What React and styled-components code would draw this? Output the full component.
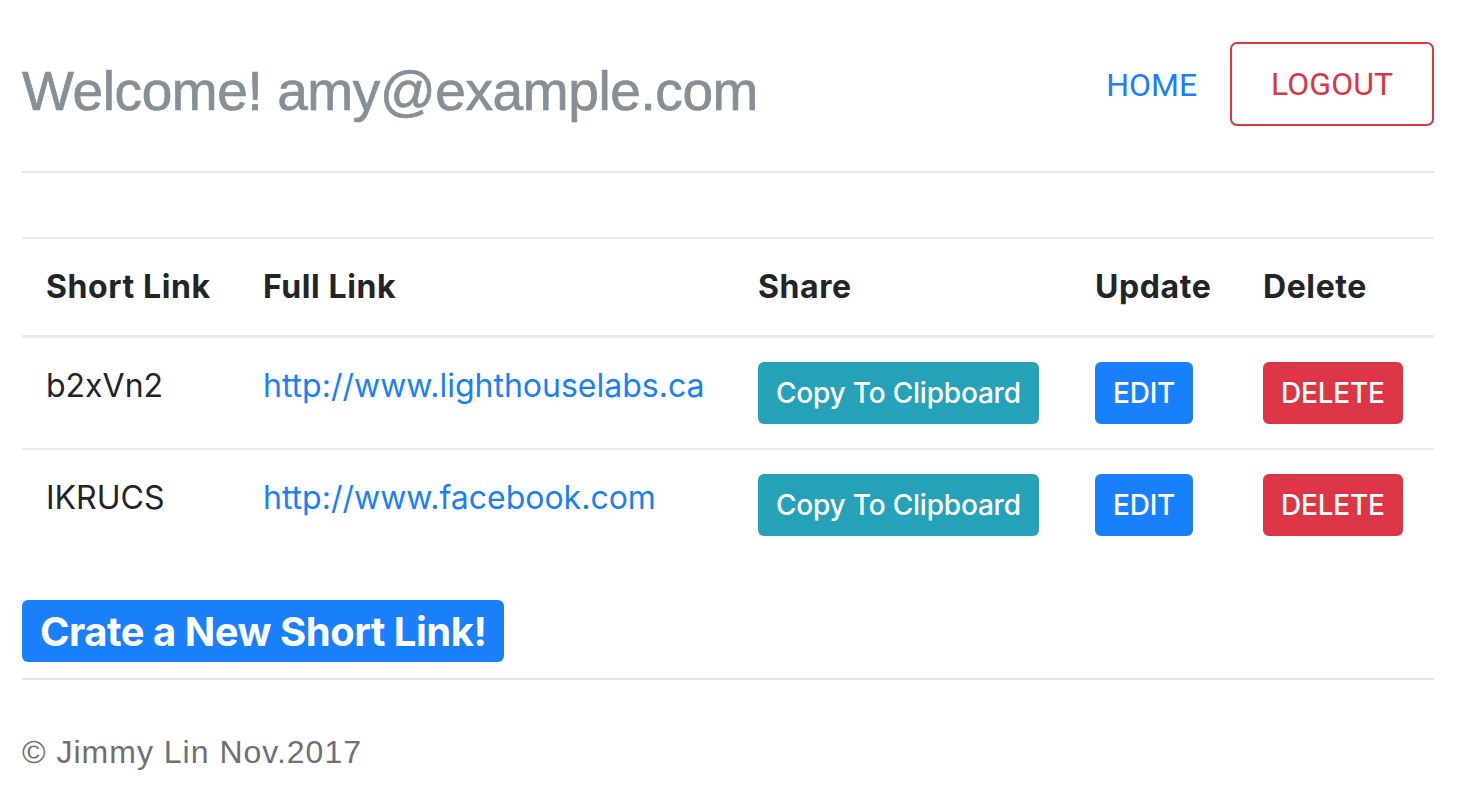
import React from "react";
import styled, { createGlobalStyle } from "styled-components";

const links = [
  { short: "b2xVn2", full: "http://www.lighthouselabs.ca" },
  { short: "IKRUCS", full: "http://www.facebook.com" },
];

const GlobalStyle = createGlobalStyle`
  body {
    margin: 0;
    background: #fff;
    font-family: Inter, "Noto Sans", sans-serif;
    color: #212529;
  }
`;

const App = () => {
  return (
    <>
      <GlobalStyle />
      <Page>
        <Header>
          <Welcome>Welcome! amy@example.com</Welcome>
          <Nav>
            <NavLink href="#">HOME</NavLink>
            <LogoutButton>LOGOUT</LogoutButton>
          </Nav>
        </Header>
        <Rule />
        <Table>
          <colgroup>
            <col style={{ width: 217 }} />
            <col style={{ width: 495 }} />
            <col style={{ width: 337 }} />
            <col style={{ width: 168 }} />
            <col style={{ width: 195 }} />
          </colgroup>
          <thead>
            <tr>
              <Th>Short Link</Th>
              <Th>Full Link</Th>
              <Th>Share</Th>
              <Th>Update</Th>
              <Th>Delete</Th>
            </tr>
          </thead>
          <tbody>
            {links.map((link) => (
              <tr key={link.short}>
                <Td>{link.short}</Td>
                <Td>
                  <FullLink href={link.full}>{link.full}</FullLink>
                </Td>
                <Td>
                  <SmallButton $variant="info">Copy To Clipboard</SmallButton>
                </Td>
                <Td>
                  <SmallButton $variant="primary">EDIT</SmallButton>
                </Td>
                <Td>
                  <SmallButton $variant="danger">DELETE</SmallButton>
                </Td>
              </tr>
            ))}
          </tbody>
        </Table>
        <CreateButton>Crate a New Short Link!</CreateButton>
        <BottomRule />
        <Footer>© Jimmy Lin Nov.2017</Footer>
      </Page>
    </>
  );
};

export default App;

const colors = {
  primary: "#1a7ffb",
  danger: "#dc3545",
  info: "#26a2b8",
};

const Page = styled.div`
  padding: 0 26px 0 22px;
  width: 1412px;
`;

const Header = styled.header`
  display: flex;
  justify-content: space-between;
  align-items: flex-start;
  padding-top: 42px;
`;

const Welcome = styled.h1`
  margin: 16px 0 0;
  font-family: "Liberation Sans", Arial, sans-serif;
  font-size: 55px;
  font-weight: 400;
  line-height: 1.2;
  letter-spacing: -0.4px;
  -webkit-text-stroke: 0.7px #868e96;
  color: #868e96;
`;

const Nav = styled.nav`
  display: flex;
  align-items: center;
  gap: 33px;
`;

const NavLink = styled.a`
  font-family: Roboto, "Liberation Sans", sans-serif;
  font-size: 32px;
  color: ${colors.primary};
  text-decoration: none;
  padding-top: 2px;
`;

const LogoutButton = styled.div`
  border: 2px solid ${colors.danger};
  border-radius: 7px;
  padding: 16px 39px;
  font-family: Roboto, "Liberation Sans", sans-serif;
  font-size: 32px;
  line-height: 48px;
  color: ${colors.danger};
`;

const Rule = styled.hr`
  margin: 45px 0 0;
  border: 0;
  border-top: 2px solid #e6e6e6;
`;

const Table = styled.table`
  width: 100%;
  margin-top: 64px;
  border-collapse: collapse;
  table-layout: fixed;
`;

const Th = styled.th`
  padding: 24px;
  text-align: left;
  font-size: 32px;
  font-weight: 700;
  line-height: 48px;
  letter-spacing: 0.6px;
  color: #212529;
  border-top: 2px solid #e9ecef;
  border-bottom: 3px solid #e9ecef;
  white-space: nowrap;
`;

const Td = styled.td`
  padding: 24px;
  vertical-align: top;
  font-size: 32px;
  line-height: 48px;
  color: #212529;
  border-top: 2px solid #e9ecef;
  white-space: nowrap;
`;

const FullLink = styled.a`
  color: ${colors.primary};
  text-decoration: none;
`;

const SmallButton = styled.span`
  display: inline-flex;
  align-items: center;
  vertical-align: top;
  height: 62px;
  box-sizing: border-box;
  padding: 0 18px;
  border-radius: 6px;
  background: ${(p) => colors[p.$variant]};
  color: #fff;
  font-size: 28px;
  font-weight: 500;
  letter-spacing: -0.2px;
`;

const CreateButton = styled.div`
  display: inline-flex;
  align-items: center;
  height: 62px;
  margin-top: 40px;
  padding: 0 18px;
  border-radius: 6px;
  background: ${colors.primary};
  color: #fff;
  font-size: 40px;
  font-weight: 700;
  letter-spacing: -0.5px;
`;

const BottomRule = styled.hr`
  margin: 16px 0 0;
  border: 0;
  border-top: 2px solid #e6e6e6;
`;

const Footer = styled.footer`
  padding: 54px 0 20px;
  font-family: "Liberation Sans", Arial, sans-serif;
  font-size: 32px;
  letter-spacing: 1px;
  color: #707070;
`;
